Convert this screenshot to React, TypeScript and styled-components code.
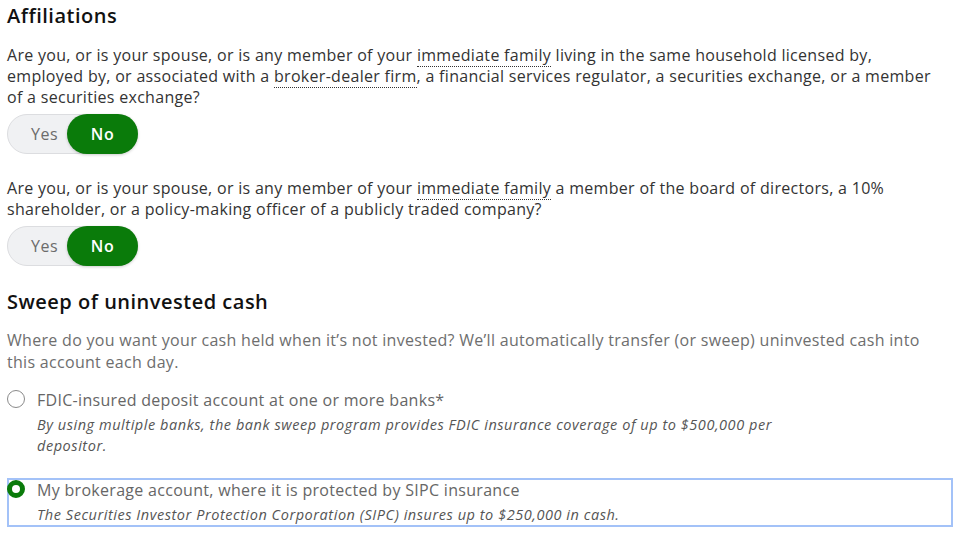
import styled, { createGlobalStyle } from "styled-components";

const GlobalStyle = createGlobalStyle`
  html, body {
    margin: 0;
    padding: 0;
    background: #ffffff;
  }
  body {
    font-family: "Open Sans", "Noto Sans", sans-serif;
    color: #2b2b2b;
    letter-spacing: 0.3px;
  }
`;

const Page = styled.div`
  width: 946px;
  padding: 4px 7px 0 7px;
`;

const SectionTitle = styled.h2`
  font-size: 20px;
  font-weight: 600;
  letter-spacing: 0.5px;
  color: #111;
  margin: 0 0 17px 0;
  line-height: 24px;
`;

const Question = styled.p`
  max-width: 935px;
  font-size: 16px;
  line-height: 21px;
  margin: 0 0 6px 0;
  color: #333;
`;

const Term = styled.span`
  border-bottom: 1px dotted #333;
`;

const Toggle = styled.div`
  display: flex;
  width: 131px;
  height: 40px;
  border-radius: 20px;
  background: #f0f1f3;
  border: 1px solid #dcdde0;
  box-sizing: border-box;
  margin-bottom: 24px;
`;

const ToggleOption = styled.button<{ $active?: boolean }>`
  flex: ${(p) => (p.$active ? "0 0 71px" : "1")};
  height: 40px;
  margin: -1px ${(p) => (p.$active ? "-1px" : "0")} -1px -1px;
  padding: 0 0 0 ${(p) => (p.$active ? "0" : "14px")};
  border: none;
  border-radius: 20px;
  font-family: inherit;
  font-size: 16px;
  letter-spacing: 0.5px;
  background: ${(p) => (p.$active ? "#0a7b0a" : "transparent")};
  color: ${(p) => (p.$active ? "#fff" : "#6b6b6b")};
  font-weight: ${(p) => (p.$active ? 600 : 400)};
  box-shadow: ${(p) => (p.$active ? "0 1px 3px rgba(0,0,0,0.2)" : "none")};
`;

const Intro = styled.p`
  max-width: 935px;
  font-size: 16px;
  line-height: 22px;
  color: #6e6e6e;
  margin: -2px 0 15px 0;
`;

const Option = styled.label<{ $selected?: boolean }>`
  display: grid;
  grid-template-columns: 28px 1fr;
  border: 2px solid ${(p) => (p.$selected ? "#a3c2f8" : "transparent")};
  margin-bottom: 20px;
`;

const Radio = styled.span<{ $checked?: boolean }>`
  width: 18px;
  height: 18px;
  box-sizing: border-box;
  border-radius: 50%;
  margin: 0 0 0 -2px;
  border: ${(p) => (p.$checked ? "5px solid #0a7b0a" : "1px solid #8a8a8a")};
  background: #fff;
`;

const OptionLabel = styled.div`
  font-size: 16px;
  line-height: 20px;
  color: #666;
`;

const OptionNote = styled.div`
  grid-column: 2;
  font-size: 14.5px;
  font-style: italic;
  letter-spacing: 0.55px;
  line-height: 21px;
  color: #555;
  margin-top: 4px;
  max-width: 770px;
`;

const YesNo = () => (
  <Toggle>
    <ToggleOption>Yes</ToggleOption>
    <ToggleOption $active>No</ToggleOption>
  </Toggle>
);

export default function App() {
  return (
    <>
      <GlobalStyle />
      <Page>
        <SectionTitle>Affiliations</SectionTitle>
        <Question>
          Are you, or is your spouse, or is any member of your <Term>immediate family</Term> living in
          the same household licensed by, employed by, or associated with a{" "}
          <Term>broker-dealer firm</Term>, a financial services regulator, a securities exchange, or a
          member of a securities exchange?
        </Question>
        <YesNo />
        <Question>
          Are you, or is your spouse, or is any member of your <Term>immediate family</Term> a member
          of the board of directors, a 10% shareholder, or a policy-making officer of a publicly
          traded company?
        </Question>
        <YesNo />

        <SectionTitle>Sweep of uninvested cash</SectionTitle>
        <Intro>
          Where do you want your cash held when it’s not invested? We’ll automatically transfer (or
          sweep) uninvested cash into this account each day.
        </Intro>

        <Option>
          <Radio />
          <OptionLabel>FDIC-insured deposit account at one or more banks*</OptionLabel>
          <OptionNote>
            By using multiple banks, the bank sweep program provides FDIC insurance coverage of up to
            $500,000 per depositor.
          </OptionNote>
        </Option>

        <Option $selected>
          <Radio $checked />
          <OptionLabel>My brokerage account, where it is protected by SIPC insurance</OptionLabel>
          <OptionNote>
            The Securities Investor Protection Corporation (SIPC) insures up to $250,000 in cash.
          </OptionNote>
        </Option>
      </Page>
    </>
  );
}
